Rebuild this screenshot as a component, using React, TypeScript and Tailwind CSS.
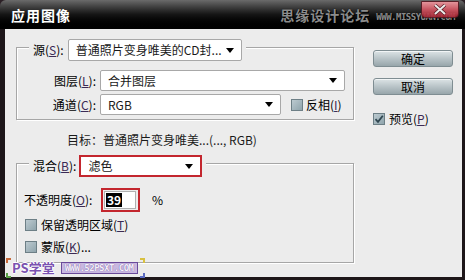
const cjk = "font-['Microsoft_YaHei','Noto_Sans_CJK_SC','Noto_Sans',sans-serif]"

function Arrow() {
  return <span className="w-0 h-0 border-x-[4px] border-x-transparent border-t-[5px] border-t-black" />
}

function Combo({ text, className }: { text: string; className: string }) {
  return (
    <div
      className={`flex items-center justify-between bg-white border border-[#a8a8a8] rounded-[2px] pl-[7px] pr-[7px] text-[#1a1a1a] ${className}`}
    >
      <span className="whitespace-nowrap">{text}</span>
      <Arrow />
    </div>
  )
}

function Check({ checked }: { checked?: boolean }) {
  return (
    <span className="relative w-[12px] h-[12px] border border-[#6d7f86] bg-gradient-to-br from-[#bccad0] to-[#8fa4ac] shrink-0">
      {checked && (
        <svg viewBox="0 0 12 12" className="absolute -left-[1px] -top-[1px] w-[12px] h-[12px]">
          <path d="M2.5 6.2 L5 8.8 L9.8 2.8" stroke="#2f4650" strokeWidth="1.8" fill="none" />
        </svg>
      )}
    </span>
  )
}

function Key({ k }: { k: string }) {
  return (
    <>
      (<u className="text-[#3b2a55]">{k}</u>)
    </>
  )
}

function Btn({ label }: { label: string }) {
  return (
    <div className="h-[17px] w-[80px] flex items-center justify-center rounded-[3px] border border-[#7f8d92] bg-gradient-to-b from-[#dde4e6] via-[#b9c4c8] to-[#98a6ab] text-black shadow-[inset_0_1px_0_#f2f5f6]">
      {label}
    </div>
  )
}

function Corner({ className }: { className: string }) {
  return <span className={`absolute w-[5px] h-[5px] ${className}`} />
}

export default function App() {
  return (
    <div className={`relative w-[465px] h-[280px] bg-[#2b1f25] overflow-hidden text-[12px] leading-[16px] ${cjk}`}>
      <div className="flex flex-col h-full">
        {/* title bar */}
        <div className="relative h-[29px] rounded-t-[6px] bg-gradient-to-b from-[#6b6b6b] via-[#151515] to-[#000] flex items-center pl-[11px]">
          <span className="text-white font-bold text-[14px] tracking-[1px]">应用图像</span>
          <div className="ml-auto mr-[10px] flex items-end gap-[6px]">
            <span className="text-[14px] font-bold text-[#8c8c8c] [text-shadow:0_0_1px_#000,1px_1px_0_#000] tracking-[1px]">
              思缘设计论坛
            </span>
            <span className="text-[9px] leading-[12px] font-bold text-[#8a8a8a] font-['DejaVu_Sans_Mono',monospace] tracking-[-0.5px] [text-shadow:1px_1px_0_#000]">
              WWW.MISSYUAN.COM
            </span>
          </div>
          <div className="absolute right-[6px] top-[1px] w-[38px] h-[17px] rounded-b-[4px] border border-[#5a1a22] bg-gradient-to-b from-[#f29aa2] via-[#d85866] to-[#a82636] flex items-center justify-center opacity-90">
            <svg viewBox="0 0 14 11" className="w-[14px] h-[11px]">
              <path d="M2 1 L12 10 M12 1 L2 10" stroke="#5a1a22" strokeWidth="3.4" />
              <path d="M2 1 L12 10 M12 1 L2 10" stroke="#fff" strokeWidth="2" />
            </svg>
          </div>
        </div>

        {/* body */}
        <div className="flex-1 flex bg-[#ececec] border-l-[5px] border-r-[3px] border-b-[3px] border-[#1d1619] pl-[11px]">
          <div className="w-[338px] pt-[18px] flex flex-col">
            {/* source group */}
            <div className="border border-[#a6a6a6] shadow-[inset_1px_1px_0_#fff,1px_1px_0_#fff] pb-[4px]">
              <div className="-mt-[9px] ml-[12px] px-[4px] w-fit h-[22px] bg-[#ececec] flex items-center">
                <span>
                  源<Key k="S" />:
                </span>
                <Combo text="普通照片变身唯美的CD封..." className="ml-[4px] w-[174px] h-[22px]" />
              </div>
              <div className="mt-[9px] flex items-center h-[21px]">
                <span className="w-[79px] text-right">
                  图层<Key k="L" />:
                </span>
                <Combo text="合并图层" className="ml-[4px] w-[245px] h-[21px]" />
              </div>
              <div className="mt-[3px] flex items-center h-[21px]">
                <span className="w-[79px] text-right">
                  通道<Key k="C" />:
                </span>
                <Combo text="RGB" className="ml-[4px] w-[181px] h-[21px]" />
                <span className="ml-[10px] flex items-center gap-[3px]">
                  <Check />
                  <span>
                    反相<Key k="I" />
                  </span>
                </span>
              </div>
            </div>

            <div className="mt-[12px] h-[16px] pl-[51px] whitespace-nowrap text-[#1a1a1a]">
              目标：普通照片变身唯美...(..., RGB)
            </div>

            {/* blending group */}
            <div className="mt-[15px] border border-[#a6a6a6] shadow-[inset_1px_1px_0_#fff,1px_1px_0_#fff] pb-[7px]">
              <div className="-mt-[9px] ml-[12px] px-[4px] w-fit h-[22px] bg-[#ececec] flex items-center">
                <span>
                  混合<Key k="B" />:
                </span>
                <Combo text="滤色" className="ml-[3px] w-[123px] h-[22px] border-2 border-[#c3262e] rounded-none pl-[5px] pr-[6px]" />
              </div>
              <div className="mt-[11px] h-[24px] flex items-center pl-[7px]">
                <span className="w-[77px]">
                  不透明度<Key k="O" />:
                </span>
                <div className="w-[39px] h-[24px] border-2 border-[#c3262e] flex items-center pl-[1px]">
                  <div className="w-[32px] h-[18px] bg-white border border-[#b0b0b0] flex items-center pl-[1px]">
                    <span className="bg-black text-white font-bold px-[1px] leading-[14px]">39</span>
                  </div>
                </div>
                <span className="ml-[12px]">%</span>
              </div>
              <div className="mt-[5px] h-[16px] flex items-center gap-[4px] pl-[8px]">
                <Check />
                <span>
                  保留透明区域<Key k="T" />
                </span>
              </div>
              <div className="mt-[6px] h-[16px] flex items-center gap-[4px] pl-[8px]">
                <Check />
                <span>
                  蒙版<Key k="K" />...
                </span>
              </div>
            </div>
          </div>

          <div className="ml-[19px] w-[80px] pt-[21px] flex flex-col">
            <Btn label="确定" />
            <div className="mt-[11px]">
              <Btn label="取消" />
            </div>
            <div className="mt-[17px] h-[14px] flex items-center gap-[4px]">
              <Check checked />
              <span>
                预览<Key k="P" />
              </span>
            </div>
          </div>
        </div>
      </div>

      {/* watermark */}
      <div className="absolute left-[6px] bottom-[2px] w-[139px] h-[20px] flex items-center gap-[6px] pl-[6px]">
        <Corner className="left-0 top-0 border-l-2 border-t-2 border-[#c86a3a]" />
        <Corner className="left-0 bottom-0 border-l-2 border-b-2 border-[#5aa048]" />
        <Corner className="right-0 top-0 border-r-2 border-t-2 border-[#d8c040]" />
        <Corner className="right-0 bottom-0 border-r-2 border-b-2 border-[#5a6ac0]" />
        <span className="text-[13px] font-bold text-[#7a52b0] [text-shadow:1px_0_0_#fff,-1px_0_0_#fff,0_1px_0_#fff,0_-1px_0_#fff]">
          PS学堂
        </span>
        <span className="h-[12px] px-[3px] bg-[#c9b8e0] border border-[#6a4a9a] text-[9px] leading-[10px] font-bold text-[#f4f0fa] font-['DejaVu_Sans_Mono',monospace] tracking-[-0.5px] [text-shadow:0_0_1px_#5a3a8a]">
          WWW.52PSXT.COM
        </span>
      </div>
    </div>
  )
}
